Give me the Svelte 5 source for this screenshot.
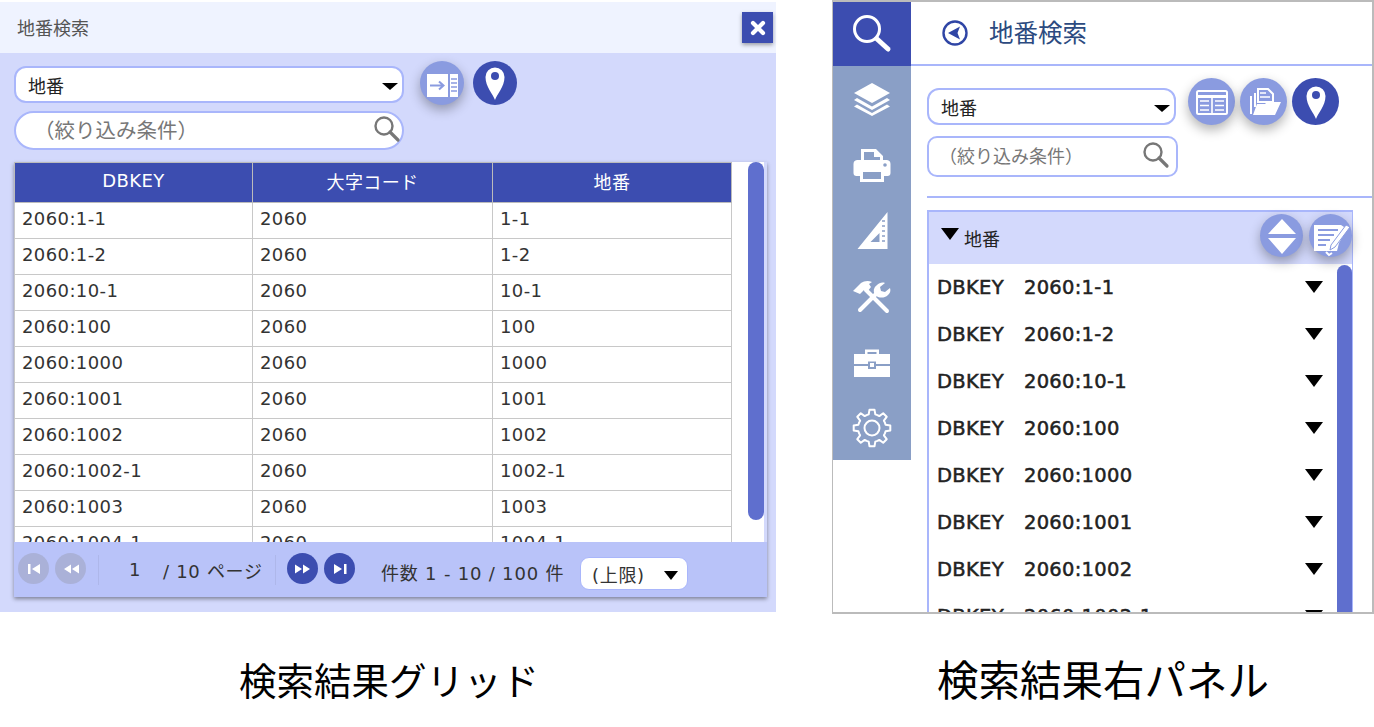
<script lang="ts">
	const keys = ['1-1', '1-2', '10-1', '100', '1000', '1001', '1002', '1002-1', '1003', '1004-1'];
	const panelKeys = ['1-1', '1-2', '10-1', '100', '1000', '1001', '1002', '1002-1'];

	function gearPath(cx: number, cy: number, outer: number, inner: number, teeth: number) {
		let d = '';
		const step = (Math.PI * 2) / teeth;
		for (let i = 0; i < teeth; i++) {
			const a = i * step - Math.PI / 2;
			const pts = [
				[inner, a - step * 0.5],
				[inner, a - step * 0.3],
				[outer, a - step * 0.17],
				[outer, a + step * 0.17],
				[inner, a + step * 0.3]
			];
			for (const [r, t] of pts) {
				const x = (cx + r * Math.cos(t)).toFixed(1);
				const y = (cy + r * Math.sin(t)).toFixed(1);
				d += (d ? 'L' : 'M') + x + ' ' + y;
			}
		}
		return d + 'Z';
	}
</script>

{#snippet pin()}
	<svg width="44" height="44" viewBox="0 0 44 44">
		<path d="M22 39c-2-6-9.500-13-9.500-23a9.500 9.500 0 0 1 19 0c0 10-7.500 17-9.500 23z" fill="#fff" />
		<circle cx="22" cy="15" r="4" fill="#3c4db0" />
	</svg>
{/snippet}

<div class="page">
	<section class="figure left">
		<div class="gridPanel">
			<div class="titleBar">
				<span>地番検索</span>
				<button class="close" aria-label="close">
					<svg width="16" height="16" viewBox="0 0 16 16">
						<path d="M3 3l10 10M13 3L3 13" stroke="#fff" stroke-width="4.200" stroke-linecap="round" />
					</svg>
				</button>
			</div>
			<div class="gridBody">
				<div class="controls">
					<div class="fields">
						<div class="select">
							<span>地番</span>
							<i class="caret"></i>
						</div>
						<div class="search round">
							<input placeholder="（絞り込み条件）" />
							<svg width="30" height="30" viewBox="0 0 30 30">
								<circle cx="13" cy="12" r="8.500" fill="none" stroke="#777" stroke-width="2.400" />
								<path d="M19 18l8 8" stroke="#777" stroke-width="3.200" stroke-linecap="round" />
							</svg>
						</div>
					</div>
					<button class="circle light lifted" aria-label="panel">
						<svg width="44" height="44" viewBox="0 0 44 44">
							<path d="M7 13h21v23H7z" fill="#fff" />
							<path d="M30 13h8v23h-8z" fill="#fff" />
							<path d="M10 24.500h13M19 20.500l4.500 4-4.500 4" fill="none" stroke="#8a9be0" stroke-width="2" />
							<path d="M31 18h6M31 22h6M31 26h6M31 30h6" stroke="#8a9be0" stroke-width="1.500" />
						</svg>
					</button>
					<button class="circle dark" aria-label="pin">{@render pin()}</button>
				</div>

				<div class="gridWrap">
					<div class="grid">
						<table>
							<colgroup>
								<col class="c1" />
								<col class="c2" />
								<col class="c3" />
							</colgroup>
							<thead>
								<tr><th>DBKEY</th><th>大字コード</th><th>地番</th></tr>
							</thead>
							<tbody>
								{#each keys as key}
									<tr><td>2060:{key}</td><td>2060</td><td>{key}</td></tr>
								{/each}
							</tbody>
						</table>
						<div class="track"><div class="thumb"></div></div>
					</div>
					<div class="pager">
						<button class="pageBtn off" aria-label="first">
							<svg width="30" height="30" viewBox="0 0 30 30"><path d="M9 10h2.500v10H9zM21 10v10l-8-5z" fill="#fff" /></svg>
						</button>
						<button class="pageBtn off second" aria-label="prev">
							<svg width="30" height="30" viewBox="0 0 30 30"><path d="M15 10.500v9L8 15zM23 10.500v9L16 15z" fill="#fff" /></svg>
						</button>
						<i class="sep first"></i>
						<span class="current">1</span>
						<span class="pages">/ 10 ページ</span>
						<i class="sep"></i>
						<button class="pageBtn on next" aria-label="next">
							<svg width="30" height="30" viewBox="0 0 30 30"><path d="M7 10.500v9l7-4.500zM15 10.500v9l7-4.500z" fill="#fff" /></svg>
						</button>
						<button class="pageBtn on second" aria-label="last">
							<svg width="30" height="30" viewBox="0 0 30 30"><path d="M9 10v10l8-5zM19 10h2.500v10H19z" fill="#fff" /></svg>
						</button>
						<span class="count">件数 1 - 10 / 100 件</span>
						<div class="limit">
							<span>(上限)</span>
							<i class="caret"></i>
						</div>
					</div>
				</div>
			</div>
		</div>
		<p class="caption">検索結果グリッド</p>
	</section>

	<section class="figure right">
		<div class="sidePanel">
			<nav>
				<div class="navItem active">
					<svg width="42" height="42" viewBox="0 0 42 42">
						<circle cx="16" cy="16" r="12.500" fill="none" stroke="#fff" stroke-width="3" />
						<path d="M26 26l11 10" stroke="#fff" stroke-width="5" stroke-linecap="round" />
					</svg>
				</div>
				<div class="navItem">
					<svg width="40" height="36" viewBox="0 0 40 36">
						<path d="M20 2l18 10-18 10L2 12z" fill="#fff" />
						<path d="M5 17l15 8.500L35 17l3 2-18 10L2 19z" fill="#fff" />
						<path d="M5 23.500L20 32l15-8.500 3 2L20 35 2 25.500z" fill="#fff" />
					</svg>
				</div>
				<div class="navItem">
					<svg width="40" height="36" viewBox="0 0 40 36">
						<path d="M9 14V2h15l7 7v5h-3v-4h-6V5H12v9z" fill="#fff" />
						<path d="M5 13h30a4 4 0 0 1 3.500 4v9a3 3 0 0 1-3 3H32v6H8v-6H4.500a3 3 0 0 1-3-3v-9A4 4 0 0 1 5 13zm6 12v7h18v-7z" fill="#fff" fill-rule="evenodd" />
						<circle cx="33" cy="18" r="1.800" fill="#8a9fc6" />
					</svg>
				</div>
				<div class="navItem">
					<svg width="34" height="40" viewBox="0 0 34 40">
						<path d="M32.500 1v37H2.500zM24.500 22l-9 9h9z" fill="#fff" fill-rule="evenodd" />
						<path d="M27 10h3M27 15h3M27 20h3M27 25h3M27 30h3" stroke="#8a9fc6" stroke-width="1.400" />
					</svg>
				</div>
				<div class="navItem">
					<svg width="40" height="38" viewBox="0 0 40 38">
						<path d="M14 12l21 21" stroke="#fff" stroke-width="4" stroke-linecap="round" />
						<path d="M1 13l8-8c3-2 7-3 11-1l-3 2 2 3-4 5-3-2-4 4z" fill="#fff" />
						<path d="M8 32l16-16" stroke="#fff" stroke-width="4" stroke-linecap="round" />
						<path d="M23 17a7 7 0 0 1 2-10c2-2 5-3 8-2l-5 4 1 4 4 1 5-4c1 3 0 5-2 7-3 3-7 3-10 2z" fill="#fff" />
					</svg>
				</div>
				<div class="navItem">
					<svg width="38" height="30" viewBox="0 0 38 30">
						<path d="M12 6V1.500h14V6h-2.500V4h-9v2z" fill="#fff" />
						<path d="M1 6h36v10H23v-2.500h-8V16H1z" fill="#fff" />
						<path d="M1 18h14v3h8v-3h14v11H1z" fill="#fff" />
						<path d="M17 15h4v4h-4z" fill="#fff" />
					</svg>
				</div>
				<div class="navItem">
					<svg width="40" height="40" viewBox="0 0 40 40">
						<path d={gearPath(20, 20, 18.500, 14, 8)} fill="none" stroke="#fff" stroke-width="2" stroke-linejoin="round" />
						<circle cx="20" cy="20" r="7.500" fill="none" stroke="#fff" stroke-width="2" />
					</svg>
				</div>
			</nav>

			<div class="sideMain">
				<header class="sideHead">
					<svg width="26" height="26" viewBox="0 0 26 26">
						<circle cx="13" cy="13" r="11.500" fill="none" stroke="#2f45a5" stroke-width="2.400" />
						<path d="M6 13L18 6.500 15.500 13l2.500 6.500z" fill="#2f45a5" />
					</svg>
					<h2>地番検索</h2>
				</header>

				<div class="sideControls">
					<div class="fields narrow">
						<div class="select small">
							<span>地番</span>
							<i class="caret"></i>
						</div>
						<div class="search squared">
							<input placeholder="（絞り込み条件）" />
							<svg width="30" height="30" viewBox="0 0 30 30">
								<circle cx="13" cy="12" r="8.500" fill="none" stroke="#777" stroke-width="2.400" />
								<path d="M19 18l8 8" stroke="#777" stroke-width="3.200" stroke-linecap="round" />
							</svg>
						</div>
					</div>
					<div class="sideButtons">
						<button class="circle big light lifted" aria-label="table">
							<svg width="46" height="46" viewBox="0 0 46 46">
								<rect x="8" y="12" width="30" height="23" rx="1.500" fill="none" stroke="#fff" stroke-width="2" />
								<path d="M8 17.500h30" stroke="#fff" stroke-width="3" />
								<path d="M23 18v16M11 22h9M11 26.500h9M11 31h9M26 22h9M26 26.500h9M26 31h9" stroke="#fff" stroke-width="1.600" />
							</svg>
						</button>
						<button class="circle big light lifted" aria-label="folder">
							<svg width="46" height="46" viewBox="0 0 46 46">
								<path d="M9 17h2v18H9zM13 14h2v14h-2z" fill="#fff" />
								<path d="M17 10h10l5 5v8H17z" fill="none" stroke="#fff" stroke-width="2" />
								<path d="M19 14h6M19 18h10" stroke="#fff" stroke-width="1.500" />
								<path d="M12 36l4-11h8l2-2h14l-6 13z" fill="#fff" />
							</svg>
						</button>
						<button class="circle big dark" aria-label="pin">{@render pin()}</button>
					</div>
				</div>

				<div class="accordion">
					<div class="accHead">
						<i class="tri big"></i>
						<span>地番</span>
						<div class="accButtons">
							<button class="circle small light lifted" aria-label="sort">
								<svg width="43" height="43" viewBox="0 0 43 43">
									<path d="M22 5l14 15H8zM22 40L8 24h28z" fill="#fff" />
								</svg>
							</button>
							<button class="circle small light lifted" aria-label="edit">
								<svg width="43" height="43" viewBox="0 0 43 43">
									<path d="M5 11h27l6 4-8 14-2 8H5z" fill="#fff" />
									<path d="M9 16h20M9 21h16M9 26h12M9 31h8" stroke="#8a9be0" stroke-width="2" />
									<path d="M41 13L26 33l-5 3 1-5 15-20z" fill="#fff" stroke="#8a9be0" stroke-width="1" />
									<path d="M17 38l3 3 3-2" fill="none" stroke="#fff" stroke-width="2" />
								</svg>
							</button>
						</div>
					</div>
					<div class="accBody">
						<div class="rows">
							{#each panelKeys as key}
								<div class="row">
									<b>DBKEY</b>
									<b class="val">2060:{key}</b>
									<i class="tri"></i>
								</div>
							{/each}
						</div>
						<div class="accThumb"></div>
					</div>
				</div>
			</div>
		</div>
		<p class="caption">検索結果右パネル</p>
	</section>
</div>

<style>
	:global(body) {
		background: #fff;
		font-family: 'Noto Sans', 'Noto Sans CJK JP', sans-serif;
		color: #333;
	}
	button {
		border: none;
		padding: 0;
		cursor: pointer;
		display: block;
	}
	svg {
		display: block;
	}
	.page {
		display: flex;
		width: 1374px;
		height: 727px;
		overflow: hidden;
	}
	.figure {
		display: flex;
		flex-direction: column;
	}
	.left {
		width: 776px;
		padding-top: 2px;
	}
	.right {
		width: 542px;
		margin-left: 56px;
	}
	.caption {
		margin: 42px 0 0;
		font-size: 37.500px;
		line-height: 50px;
		text-align: center;
		color: #000;
		font-family: 'Noto Sans CJK JP', sans-serif;
		padding-left: 2px;
	}
	.right .caption {
		margin-top: 39px;
		font-size: 41.500px;
		padding-left: 0;
	}

	/* left panel */
	.gridPanel {
		height: 610px;
		background: #d3d9fc;
		display: flex;
		flex-direction: column;
	}
	.titleBar {
		height: 51px;
		flex: none;
		background: #eff3ff;
		display: flex;
		align-items: center;
		justify-content: space-between;
		padding: 0 3px 0 17px;
		font-size: 18px;
		color: #555;
	}
	.titleBar span {
		margin-bottom: 2px;
	}
	.close {
		width: 31px;
		height: 31px;
		background: #3c4db0;
		display: flex;
		align-items: center;
		justify-content: center;
		box-shadow: 0 2px 4px rgba(0, 0, 0, 0.35);
	}
	.gridBody {
		flex: 1;
		padding: 8px 9px 15px 14px;
		display: flex;
		flex-direction: column;
	}
	.controls {
		display: flex;
		gap: 9px;
		height: 101px;
	}
	.fields {
		width: 390px;
		display: flex;
		flex-direction: column;
		gap: 8px;
		padding-top: 5px;
		margin-right: 7px;
	}
	.select {
		height: 37px;
		box-sizing: border-box;
		border: 2px solid #a9b6fb;
		border-radius: 12px;
		background: #fff;
		display: flex;
		align-items: center;
		justify-content: space-between;
		padding: 0 4px 0 12px;
		font-size: 18px;
		color: #222;
	}
	.caret {
		width: 0;
		height: 0;
		border-left: 8px solid transparent;
		border-right: 8px solid transparent;
		border-top: 7px solid #000;
		margin-top: 3px;
	}
	.search {
		height: 39px;
		box-sizing: border-box;
		border: 2px solid #a9b6fb;
		background: #fff;
		display: flex;
		align-items: center;
		padding: 0 1px 0 18px;
	}
	.search.round {
		border-radius: 20px;
		padding-bottom: 4px;
	}
	.search input {
		flex: 1;
		min-width: 0;
		border: none;
		outline: none;
		background: transparent;
		font: 20.500px 'Noto Sans CJK JP', sans-serif;
		padding: 0;
	}
	.search input::placeholder {
		color: #777;
		opacity: 1;
	}
	.circle {
		width: 44px;
		height: 44px;
		border-radius: 50%;
		flex: none;
		display: flex;
		align-items: center;
		justify-content: center;
	}
	.circle.big {
		width: 47px;
		height: 47px;
	}
	.circle.small {
		width: 43px;
		height: 43px;
	}
	.circle.light {
		background: #8a9be0;
	}
	.circle.dark {
		background: #3c4db0;
	}
	.circle.lifted {
		box-shadow: 0 5px 12px rgba(0, 0, 0, 0.3);
	}
	.gridWrap {
		height: 435px;
		display: flex;
		flex-direction: column;
		box-shadow: 0 2px 4px rgba(0, 0, 0, 0.4);
	}
	.grid {
		height: 380px;
		flex: none;
		display: flex;
		background: #fff;
		overflow: hidden;
		margin-right: 3px;
		font-family: 'DejaVu Sans', 'Noto Sans CJK JP', sans-serif;
		letter-spacing: 0.4px;
	}
	table {
		width: 717px;
		flex: none;
		table-layout: fixed;
		border-collapse: collapse;
		font-size: 18px;
		align-self: flex-start;
	}
	.c1 {
		width: 238px;
	}
	.c2 {
		width: 240px;
	}
	.c3 {
		width: 239px;
	}
	th {
		height: 40px;
		background: #3c4db0;
		color: #fff;
		font-weight: 400;
		border: 1px solid #bbb;
		padding: 0 0 4px;
		box-sizing: border-box;
	}
	td {
		height: 36px;
		box-sizing: border-box;
		padding: 0 7px 4px;
		border: 1px solid #c8c8c8;
		color: #333;
	}
	.track {
		flex: 1;
		display: flex;
		justify-content: flex-end;
	}
	.thumb {
		width: 16px;
		height: 358px;
		background: #5f6fce;
		border-radius: 8px;
	}
	.pager {
		height: 55px;
		flex: none;
		background: #b9c3f9;
		display: flex;
		align-items: center;
		padding-left: 4px;
		font-size: 18px;
		font-family: 'DejaVu Sans', 'Noto Sans CJK JP', sans-serif;
		letter-spacing: 0.7px;
		color: #333;
		position: relative;
		z-index: 1;
	}
	.pageBtn {
		width: 31px;
		height: 31px;
		border-radius: 50%;
		flex: none;
		display: flex;
		align-items: center;
		justify-content: center;
		margin-bottom: 2px;
	}
	.pageBtn.off {
		background: #aab1d8;
	}
	.pageBtn.on {
		background: #3c4db0;
	}
	.pageBtn.second {
		margin-left: 6px;
	}
	.pageBtn.next {
		margin-left: 11px;
	}
	.sep {
		width: 1px;
		height: 30px;
		background: #aeb7ea;
		flex: none;
	}
	.sep.first {
		margin-left: 12px;
	}
	.current {
		margin-left: 30px;
		width: 34px;
	}
	.pages {
		width: 112px;
		white-space: nowrap;
	}
	.count {
		margin: 5px 0 0 26px;
		width: 199px;
		white-space: nowrap;
		letter-spacing: 0.8px;
	}
	.limit {
		width: 108px;
		height: 33px;
		box-sizing: border-box;
		border: 1.500px solid #a9b6fb;
		border-radius: 9px;
		background: #fff;
		display: flex;
		align-items: center;
		justify-content: space-between;
		padding: 0 9px 0 11px;
		margin-top: 8px;
	}
	.limit .caret {
		border-left-width: 7px;
		border-right-width: 7px;
		border-top-width: 9px;
	}

	/* right panel */
	.sidePanel {
		height: 614px;
		box-sizing: border-box;
		border: 2px solid #bbb;
		border-left-width: 1px;
		display: flex;
		overflow: hidden;
	}
	nav {
		width: 78px;
		height: 458px;
		flex: none;
		background: #8a9fc6;
		display: flex;
		flex-direction: column;
	}
	.navItem {
		height: 66px;
		flex: none;
		display: flex;
		align-items: center;
		justify-content: center;
	}
	.navItem.active {
		height: 64px;
		background: #3c4db0;
	}
	.navItem:last-child {
		height: 64px;
	}
	.sideMain {
		flex: 1;
		min-width: 0;
		display: flex;
		flex-direction: column;
	}
	.sideHead {
		height: 62px;
		flex: none;
		border-bottom: 2px solid #a9b6fb;
		display: flex;
		align-items: center;
		padding-left: 31px;
		gap: 21px;
	}
	h2 {
		margin: 0 0 4px;
		font-size: 24.500px;
		font-weight: 400;
		color: #2c4a80;
	}
	.sideControls {
		display: flex;
		margin-left: 16px;
		padding-top: 12px;
		box-sizing: border-box;
		border-bottom: 2px solid #a9b6fb;
		height: 132px;
	}
	.fields.narrow {
		width: 251px;
		padding-top: 10px;
		gap: 11px;
		margin-right: 10px;
	}
	.select.small {
		width: 249px;
	}
	.search.squared {
		height: 41px;
		border-radius: 10px;
		padding: 0 6px 3px 10px;
	}
	.search.squared input {
		font-size: 18px;
	}
	.sideButtons {
		display: flex;
		gap: 5px;
	}
	.accordion {
		margin: 12px 19px 0 16px;
		border: 2px solid #a9b6fb;
		border-right-width: 1px;
		border-bottom: none;
		flex: 1;
		min-height: 0;
		display: flex;
		flex-direction: column;
	}
	.accHead {
		height: 52px;
		flex: none;
		background: #d3d9fc;
		display: flex;
		align-items: center;
		padding-left: 12px;
		font-size: 18px;
		color: #222;
	}
	.accHead span {
		margin-left: 5px;
	}
	.tri {
		width: 0;
		height: 0;
		border-left: 9px solid transparent;
		border-right: 9px solid transparent;
		border-top: 12px solid #000;
		flex: none;
	}
	.tri.big {
		margin-bottom: 8px;
	}
	.accButtons {
		margin-left: auto;
		display: flex;
		gap: 6px;
		padding-bottom: 5px;
	}
	.accBody {
		flex: 1;
		min-height: 0;
		display: flex;
		overflow: hidden;
	}
	.rows {
		flex: 1;
		min-width: 0;
	}
	.row {
		height: 47px;
		display: flex;
		align-items: center;
		padding: 0 14px 0 8px;
		box-sizing: border-box;
		font: 19.500px 'DejaVu Sans', sans-serif;
		letter-spacing: 0.3px;
		color: #222;
	}
	.row b {
		font-weight: 400;
		-webkit-text-stroke: 0.5px #222;
	}
	.row .val {
		margin-left: 20px;
	}
	.row .tri {
		margin-left: auto;
		margin-top: -2px;
	}
	.accThumb {
		width: 15px;
		flex: none;
		background: #5f6fce;
		border-radius: 8px 8px 0 0;
		margin-top: 1px;
	}
</style>
